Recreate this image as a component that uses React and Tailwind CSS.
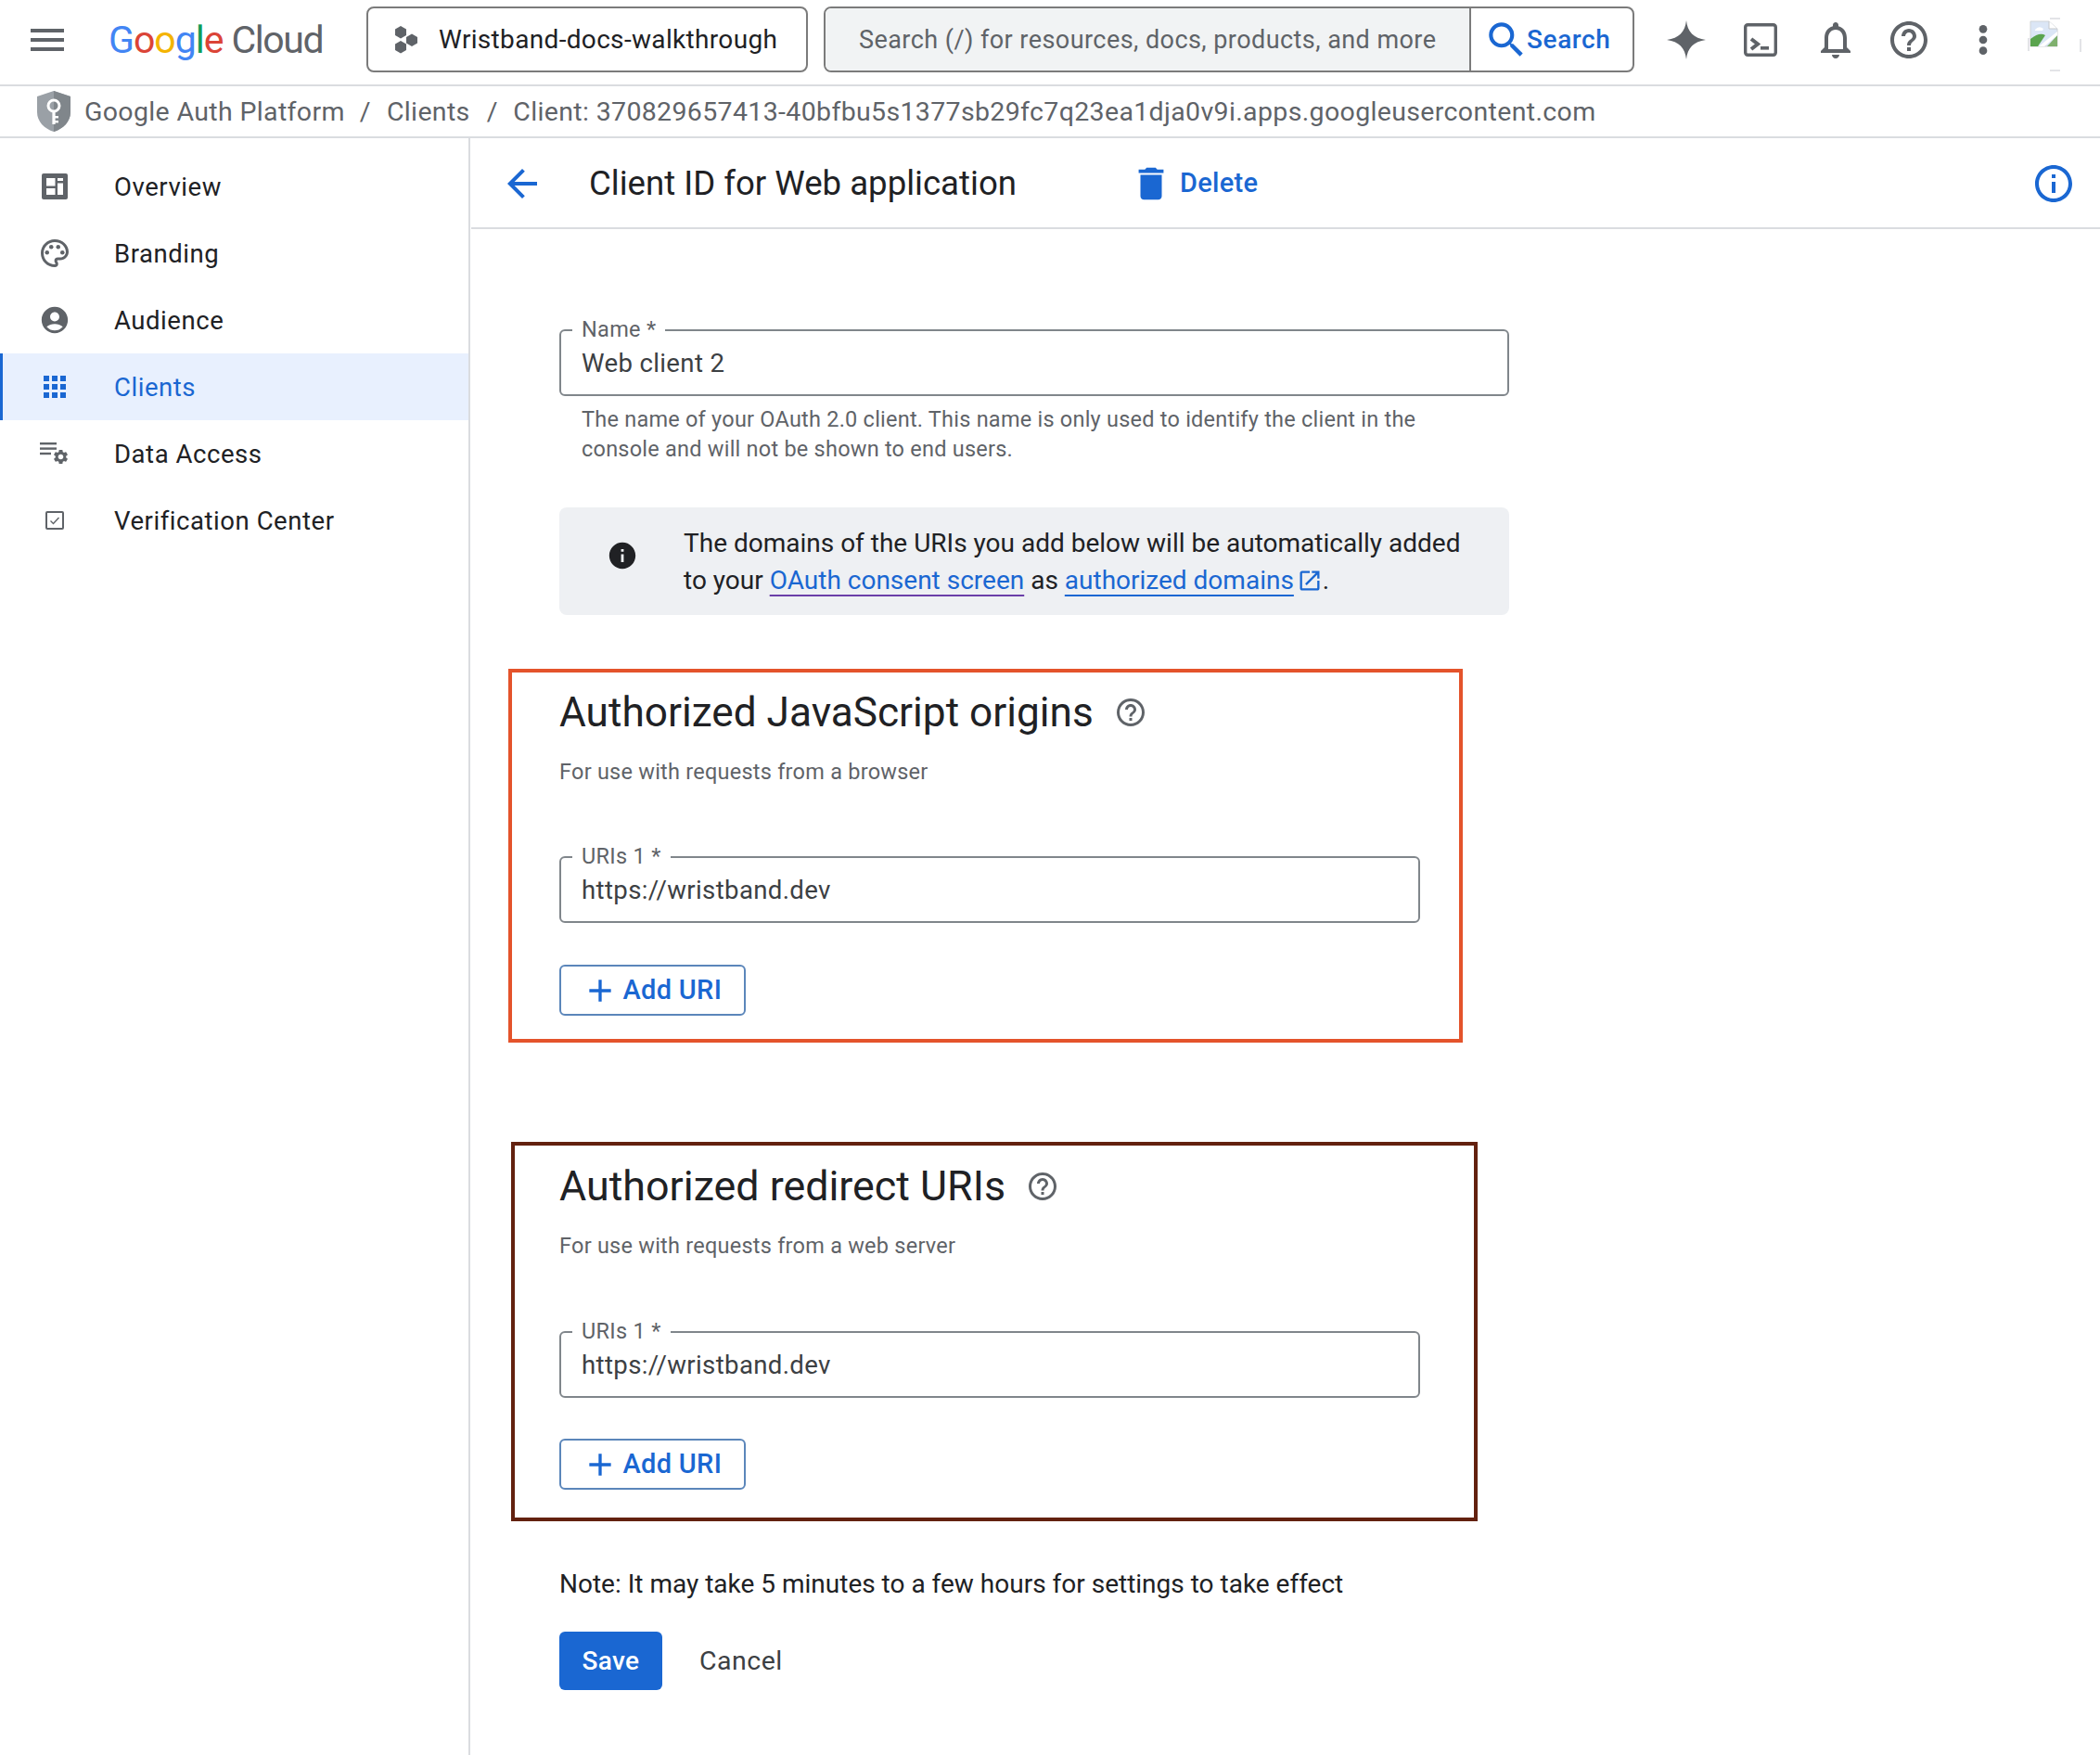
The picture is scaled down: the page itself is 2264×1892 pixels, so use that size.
import React from "react";

const P = ({ d, className = "", children }) => (
  <svg viewBox="0 0 24 24" fill="currentColor" className={className}>
    {d && <path d={d} />}
    {children}
  </svg>
);

const I = {
  palette: "M12 22C6.49 22 2 17.51 2 12S6.49 2 12 2s10 4.04 10 9c0 3.31-2.69 6-6 6h-1.77c-.28 0-.5.22-.5.5 0 .12.05.23.13.33.41.47.64 1.06.64 1.67A2.5 2.5 0 0 1 12 22zm0-18c-4.41 0-8 3.59-8 8s3.59 8 8 8c.28 0 .5-.22.5-.5a.54.54 0 0 0-.14-.35c-.41-.46-.63-1.05-.63-1.65a2.5 2.5 0 0 1 2.5-2.5H16c2.21 0 4-1.79 4-4 0-3.86-3.59-7-8-7z",
  account: "M12 2C6.48 2 2 6.48 2 12s4.48 10 10 10 10-4.48 10-10S17.52 2 12 2zm0 4c1.93 0 3.5 1.57 3.5 3.5S13.93 13 12 13s-3.5-1.57-3.5-3.5S10.07 6 12 6zm0 14c-2.03 0-4.43-.82-6.14-2.88C7.55 15.8 9.68 15 12 15s4.45.8 6.14 2.12C16.43 19.18 14.03 20 12 20z",
  gear: "M19.14 12.94c.04-.3.06-.61.06-.94 0-.32-.02-.64-.07-.94l2.03-1.58c.18-.14.23-.41.12-.61l-1.92-3.32c-.12-.22-.37-.29-.59-.22l-2.39.96c-.5-.38-1.03-.7-1.62-.94l-.36-2.54c-.04-.24-.24-.41-.48-.41h-3.84c-.24 0-.43.17-.47.41l-.36 2.54c-.59.24-1.13.57-1.62.94l-2.39-.96c-.22-.08-.47 0-.59.22L2.74 8.87c-.12.21-.08.47.12.61l2.03 1.58c-.05.3-.09.63-.09.94s.02.64.07.94l-2.03 1.58c-.18.14-.23.41-.12.61l1.92 3.32c.12.22.37.29.59.22l2.39-.96c.5.38 1.03.7 1.62.94l.36 2.54c.05.24.24.41.48.41h3.84c.24 0 .44-.17.47-.41l.36-2.54c.59-.24 1.13-.56 1.62-.94l2.39.96c.22.08.47 0 .59-.22l1.92-3.32c.12-.22.07-.47-.12-.61l-2.01-1.58zM12 15.6c-1.98 0-3.6-1.62-3.6-3.6s1.62-3.6 3.6-3.6 3.6 1.62 3.6 3.6-1.62 3.6-3.6 3.6z",
  bell: "M12 22c1.1 0 2-.9 2-2h-4c0 1.1.9 2 2 2zm6-6v-5c0-3.07-1.63-5.64-4.5-6.32V4c0-.83-.67-1.5-1.5-1.5s-1.5.67-1.5 1.5v.68C7.64 5.36 6 7.92 6 11v5l-2 2v1h16v-1l-2-2zm-2 1H8v-6c0-2.48 1.51-4.5 4-4.5s4 2.02 4 4.5v6z",
  help: "M11 18h2v-2h-2v2zm1-16C6.48 2 2 6.48 2 12s4.48 10 10 10 10-4.48 10-10S17.52 2 12 2zm0 18c-4.41 0-8-3.59-8-8s3.59-8 8-8 8 3.59 8 8-3.59 8-8 8zm0-14c-2.21 0-4 1.79-4 4h2c0-1.1.9-2 2-2s2 .9 2 2c0 2-3 1.75-3 5h2c0-2.25 3-2.5 3-5 0-2.21-1.79-4-4-4z",
  info: "M11 7h2v2h-2zm0 4h2v6h-2zm1-9C6.48 2 2 6.48 2 12s4.48 10 10 10 10-4.48 10-10S17.52 2 12 2zm0 18c-4.41 0-8-3.59-8-8s3.59-8 8-8 8 3.59 8 8-3.59 8-8 8z",
  infoFill: "M12 2C6.48 2 2 6.48 2 12s4.48 10 10 10 10-4.48 10-10S17.52 2 12 2zm1 15h-2v-6h2v6zm0-8h-2V7h2v2z",
  back: "M20 11H7.83l5.59-5.59L12 4l-8 8 8 8 1.41-1.41L7.83 13H20v-2z",
  trash: "M6 19c0 1.1.9 2 2 2h8c1.1 0 2-.9 2-2V7H6v12zM19 4h-3.5l-1-1h-5l-1 1H5v2h14V4z",
  search: "M15.5 14h-.79l-.28-.27A6.471 6.471 0 0 0 16 9.5 6.5 6.5 0 1 0 9.5 16c1.61 0 3.09-.59 4.23-1.57l.27.28v.79l5 4.99L20.49 19l-4.99-5zm-6 0C7.01 14 5 11.99 5 9.5S7.01 5 9.5 5 14 7.01 14 9.5 11.99 14 9.5 14z",
  add: "M19 13h-6v6h-2v-6H5v-2h6V5h2v6h6v2z",
  open: "M19 19H5V5h7V3H5c-1.11 0-2 .9-2 2v14c0 1.1.89 2 2 2h14c1.1 0 2-.9 2-2v-7h-2v7zM14 3v2h3.59l-9.83 9.83 1.41 1.41L19 6.41V10h2V3h-7z",
};

const Menu = ({ className }) => (
  <svg viewBox="0 0 36 24" fill="currentColor" className={className}>
    <rect y="0" width="36" height="4" />
    <rect y="10" width="36" height="4" />
    <rect y="20" width="36" height="4" />
  </svg>
);

const OverviewIcon = ({ className }) => (
  <svg viewBox="0 0 28 28" className={className}>
    <rect width="28" height="28" rx="2" fill="#5f6368" />
    <rect x="5" y="5" width="9.5" height="8.5" fill="#fff" />
    <rect x="5" y="16" width="9.5" height="7" fill="#fff" />
    <rect x="17" y="5" width="6" height="3" fill="#fff" />
    <rect x="17" y="10.5" width="6" height="12.5" fill="#fff" />
  </svg>
);

const AppsIcon = ({ className }) => (
  <svg viewBox="0 0 24 24" fill="currentColor" className={className}>
    {[0, 9, 18].flatMap((x) =>
      [0, 9, 18].map((y) => <rect key={`${x}-${y}`} x={x} y={y} width="6" height="6" />)
    )}
  </svg>
);

const DataIcon = ({ className }) => (
  <svg viewBox="0 0 32 24" fill="currentColor" className={className}>
    <rect x="0" y="0" width="18" height="2.4" />
    <rect x="0" y="5.4" width="18" height="2.4" />
    <rect x="0" y="10.8" width="12" height="2.4" />
    <svg x="13" y="6" width="19" height="19" viewBox="0 0 24 24">
      <path d={I.gear} />
    </svg>
  </svg>
);

const CheckBoxIcon = ({ className }) => (
  <svg viewBox="0 0 20 20" fill="none" className={className}>
    <rect x="1" y="1" width="18" height="18" rx="1" stroke="currentColor" strokeWidth="2" />
    <path d="M5.5 10.5l3 3 6-6.5" stroke="currentColor" strokeWidth="1.4" />
  </svg>
);

const Sparkle = ({ className }) => (
  <svg viewBox="0 0 24 24" fill="currentColor" className={className}>
    <path d="M12 0C12.7 7 16.5 11 24 12 16.5 13 12.7 17 12 24 11.3 17 7.5 13 0 12 7.5 11 11.3 7 12 0Z" />
  </svg>
);

const Terminal = ({ className }) => (
  <svg viewBox="0 0 36 36" fill="none" className={className}>
    <rect x="1.7" y="1.7" width="32.6" height="32.6" rx="2.5" stroke="currentColor" strokeWidth="3.4" />
    <path d="M8 17l7 5.5-7 5.5" stroke="currentColor" strokeWidth="4" />
    <rect x="18" y="25" width="9" height="3.6" fill="currentColor" />
  </svg>
);

const Dots = ({ className }) => (
  <svg viewBox="0 0 24 24" fill="currentColor" className={className}>
    <circle cx="12" cy="5" r="2.6" />
    <circle cx="12" cy="12" r="2.6" />
    <circle cx="12" cy="19" r="2.6" />
  </svg>
);

const Avatar = ({ className }) => (
  <svg viewBox="0 0 58 58" className={className}>
    <path d="M24 1h11M24 57h11M57 23v14M1 22v14" stroke="#dadce0" strokeWidth="1.5" fill="none" />
    <path d="M3 4h20l9 8v19H3z" fill="#dbe6f6" stroke="#d0d3d6" />
    <path d="M23 4v8h9" fill="#fff" stroke="#c4c7cb" />
    <path d="M8 13q4-5 9-1l-1 2H8z" fill="#fff" />
    <path d="M3 31V23q10-8 16-4l-8 12z" fill="#5aa44e" />
    <path d="M21 31l11-12v12z" fill="#7fb06e" />
    <path d="M12 31L32 15v4L18 31z" fill="#fff" />
  </svg>
);

const ShieldKey = ({ className }) => (
  <svg viewBox="0 0 36 44" className={className}>
    <path d="M18 0l18 6v17c0 10-8 18-18 21C8 41 0 33 0 23V6z" fill="#9aa0a6" />
    <path d="M18 0l18 6v17c0 10-8 18-18 21z" fill="#80868b" />
    <circle cx="18" cy="16" r="6" fill="none" stroke="#fff" strokeWidth="3" />
    <rect x="16.4" y="21" width="3.2" height="15" fill="#fff" />
    <rect x="19" y="27" width="4" height="2.4" fill="#fff" />
    <rect x="19" y="32" width="4" height="2.4" fill="#fff" />
  </svg>
);

const Project = ({ className }) => (
  <svg viewBox="0 0 26 30" fill="#5f6368" className={className}>
    <path d="M7 0l6 3.5v6.5l-6 3.5-6-3.5V3.5z" />
    <path d="M7 16l6 3.5V26l-6 3.5L1 26v-6.5z" />
    <path d="M19 8.5l6 3.5v6.5L19 22l-6-3.5V12z" />
  </svg>
);

const GoogleCloud = () => (
  <div className="flex items-baseline ml-[48px] w-[230px] text-[41px] leading-[50px] tracking-[-1px] whitespace-nowrap">
    <span className="text-[#4285f4]">G</span>
    <span className="text-[#db4437]">o</span>
    <span className="text-[#f4b400]">o</span>
    <span className="text-[#4285f4]">g</span>
    <span className="text-[#0f9d58]">l</span>
    <span className="text-[#db4437]">e</span>
    <span className="ml-[9px] tracking-[-1.4px] text-[#5f6368]">Cloud</span>
  </div>
);

const navItems = [
  { label: "Overview", icon: <OverviewIcon className="w-[28px] h-[28px]" /> },
  {
    label: "Branding",
    icon: (
      <P d={I.palette} className="w-[36px] h-[36px]">
        <circle cx="6.5" cy="11.5" r="1.5" />
        <circle cx="9.5" cy="7.5" r="1.5" />
        <circle cx="14.5" cy="7.5" r="1.5" />
        <circle cx="17.5" cy="11.5" r="1.5" />
      </P>
    ),
  },
  { label: "Audience", icon: <P d={I.account} className="w-[34px] h-[34px]" /> },
  { label: "Clients", icon: <AppsIcon className="w-[24px] h-[24px]" />, active: true },
  { label: "Data Access", icon: <DataIcon className="w-[32px] h-[24px]" /> },
  { label: "Verification Center", icon: <CheckBoxIcon className="w-[20px] h-[20px]" /> },
];

const Field = ({ label, value, className }) => (
  <div className={`relative border-2 border-[#80868b] rounded-[6px] flex items-center pl-[22px] pt-[2px] text-[27.6px] tracking-[0.35px] text-[#3c4043] ${className}`}>
    <span className="absolute left-[12px] top-[-16.5px] bg-white px-[10px] text-[23.5px] leading-[28px] tracking-[0.3px] text-[#5f6368]">
      {label}
    </span>
    {value}
  </div>
);

const AddUri = ({ className }) => (
  <button className={`flex items-center w-[201px] h-[55px] border-2 border-[#5b86ba] rounded-[6px] pl-[22px] text-[#1a67d2] text-[29px] font-medium tracking-[0.3px] ${className}`}>
    <P d={I.add} className="w-[40px] h-[40px] mr-[4.5px]" />
    Add URI
  </button>
);

const Section = ({ title, sub, className, headingClass, fieldClass, addClass }) => (
  <section className={`border-4 ${className}`}>
    <div className="flex items-center h-[56px] text-[#202124]">
      <h2 className={`leading-[56px] font-normal whitespace-nowrap ${headingClass}`}>{title}</h2>
      <P d={I.help} className="w-[36px] h-[36px] ml-[22px] text-[#5f6368]" />
    </div>
    <p className="mt-[20px] text-[23.5px] leading-[32px] tracking-[0.24px] text-[#5f6368]">{sub}</p>
    <Field label="URIs 1 *" value="https://wristband.dev" className={`w-[928px] h-[72px] ${fieldClass}`} />
    <AddUri className={addClass} />
  </section>
);

export default function App() {
  return (
    <div className="min-h-[1892px] bg-white font-['Roboto',sans-serif] text-[#202124]">
      <header className="h-[93px] flex items-center border-b-2 border-[#dadce0] pb-[6px]">
        <Menu className="w-[36px] h-[24px] ml-[33px] text-[#5f6368]" />
        <GoogleCloud />
        <div className="ml-[48px] w-[476px] h-[71px] border-2 border-[#7b7b7b] rounded-[8px] flex items-center pl-[28px]">
          <Project className="w-[26px] h-[30px]" />
          <span className="ml-[22px] pt-[1px] text-[28px] tracking-[0.33px] text-[#202124] whitespace-nowrap">Wristband-docs-walkthrough</span>
        </div>
        <div className="ml-[17px] w-[874px] h-[71px] border-2 border-[#7b7b7b] rounded-[8px] flex overflow-hidden">
          <div className="w-[696px] bg-[#f1f3f4] border-r-2 border-[#7b7b7b] flex items-center pl-[36px] pt-[1px] text-[27px] tracking-[0.44px] text-[#5f6368] whitespace-nowrap">
            Search (/) for resources, docs, products, and more
          </div>
          <div className="flex items-center pl-[19px] pt-[1px] text-[#1a67d2] text-[28px] font-medium tracking-[0.6px]">
            <P d={I.search} className="w-[50px] h-[50px] mr-[-3px] ml-[-6px]" />
            Search
          </div>
        </div>
        <div className="flex items-center ml-[35px] text-[#5f6368]">
          <Sparkle className="w-[42px] h-[42px]" />
          <Terminal className="w-[36px] h-[36px] ml-[41px]" />
          <P d={I.bell} className="w-[48px] h-[48px] ml-[39px]" />
          <P d={I.help} className="w-[48px] h-[48px] ml-[31px]" />
          <Dots className="w-[40px] h-[40px] ml-[36px]" />
          <Avatar className="w-[58px] h-[58px] ml-[28px] mt-[11px]" />
        </div>
      </header>

      <nav className="h-[56px] flex items-center border-b-2 border-[#dadce0] text-[28.5px] tracking-[0.35px] text-[#5f6368] whitespace-nowrap">
        <ShieldKey className="w-[36px] h-[44px] ml-[40px]" />
        <span className="ml-[15px] pt-[2px]">Google Auth Platform</span>
        <span className="ml-[16px] pt-[2px]">/</span>
        <span className="ml-[17px] pt-[2px]">Clients</span>
        <span className="ml-[18px] pt-[2px]">/</span>
        <span className="ml-[16.5px] pt-[2px]">Client: 370829657413-40bfbu5s1377sb29fc7q23ea1dja0v9i.apps.googleusercontent.com</span>
      </nav>

      <div className="flex min-h-[1743px]">
        <aside className="w-[507px] shrink-0 border-r-2 border-[#dadce0] pt-[16px]">
          {navItems.map((n) => (
            <div
              key={n.label}
              className={`h-[72px] flex items-center border-l-[3px] text-[27.5px] tracking-[0.55px] ${n.active ? "bg-[#e8f0fe] text-[#1a67d2] border-[#1a67d2]" : "text-[#202124] border-transparent"}`}
            >
              <span className={`w-[112px] flex justify-center ${n.active ? "text-[#1a67d2]" : "text-[#5f6368]"}`}>{n.icon}</span>
              <span className="ml-[8px] pt-[2px]">{n.label}</span>
            </div>
          ))}
        </aside>

        <main className="flex-1 min-w-0 pl-[1px]">
          <div className="h-[98px] border-b-2 border-[#dadce0] flex items-center pt-[2px]">
            <P d={I.back} className="w-[48px] h-[48px] ml-[31px] text-[#1a67d2]" />
            <h1 className="ml-[48px] w-[460px] whitespace-nowrap text-[36.6px] font-normal tracking-[0px] text-[#202124]">Client ID for Web application</h1>
            <P d={I.trash} className="w-[46px] h-[46px] ml-[123px] text-[#1a67d2]" />
            <span className="ml-[8px] text-[29px] font-medium tracking-[0.3px] text-[#1a67d2]">Delete</span>
            <P d={I.info} className="w-[48px] h-[48px] ml-auto mr-[26px] text-[#1a67d2]" />
          </div>

          <Field label="Name *" value="Web client 2" className="mt-[108px] ml-[95px] w-[1024px] h-[72px]" />
          <p className="mt-[9px] ml-[119px] w-[940px] text-[23.5px] leading-[32px] tracking-[0.23px] text-[#5f6368]">
            The name of your OAuth 2.0 client. This name is only used to identify the client in the console and will not be shown to end users.
          </p>

          <div className="mt-[47px] ml-[95px] w-[1024px] h-[116px] bg-[#eef0f3] rounded-[8px] flex">
            <P d={I.infoFill} className="w-[34px] h-[34px] ml-[51px] mt-[35px] text-[#202124]" />
            <p className="ml-[49px] pt-[19px] w-[860px] text-[28px] leading-[40px] text-[#202124]">
              The domains of the URIs you add below will be automatically added to your{" "}
              <a className="text-[#1a67d2] underline decoration-[#6b3fa8] decoration-2 underline-offset-[6px]">OAuth consent screen</a>{" "}
              as{" "}
              <a className="text-[#1a67d2] underline decoration-[#1a67d2] decoration-2 underline-offset-[6px]">authorized domains</a>
              <P d={I.open} className="inline-block w-[28px] h-[28px] ml-[3px] mb-[4px] text-[#1a67d2]" />.
            </p>
          </div>

          <Section
            title="Authorized JavaScript origins"
            sub="For use with requests from a browser"
            className="mt-[58px] ml-[40px] w-[1029px] h-[403px] border-[#e4532b] pl-[51px] pt-[15px]"
            headingClass="text-[44.2px] tracking-[0px]"
            fieldClass="mt-[75px]"
            addClass="mt-[45px]"
          />
          <Section
            title="Authorized redirect URIs"
            sub="For use with requests from a web server"
            className="mt-[107px] ml-[43px] w-[1042px] h-[409px] border-[#63210f] pl-[48px] pt-[16px]"
            headingClass="text-[44.8px] tracking-[0px]"
            fieldClass="mt-[76px]"
            addClass="mt-[44px]"
          />

          <p className="mt-[47px] ml-[95px] pt-[1px] text-[28px] leading-[40px] text-[#202124]">
            Note: It may take 5 minutes to a few hours for settings to take effect
          </p>
          <div className="mt-[31px] ml-[95px] flex items-center">
            <button className="w-[111px] h-[63px] rounded-[6px] pt-[1px] bg-[#1a67d2] text-white text-[28px] font-medium tracking-[0.3px]">Save</button>
            <span className="ml-[40px] pt-[2px] text-[28.5px] tracking-[0.5px] text-[#3c4043]">Cancel</span>
          </div>
        </main>
      </div>
    </div>
  );
}
